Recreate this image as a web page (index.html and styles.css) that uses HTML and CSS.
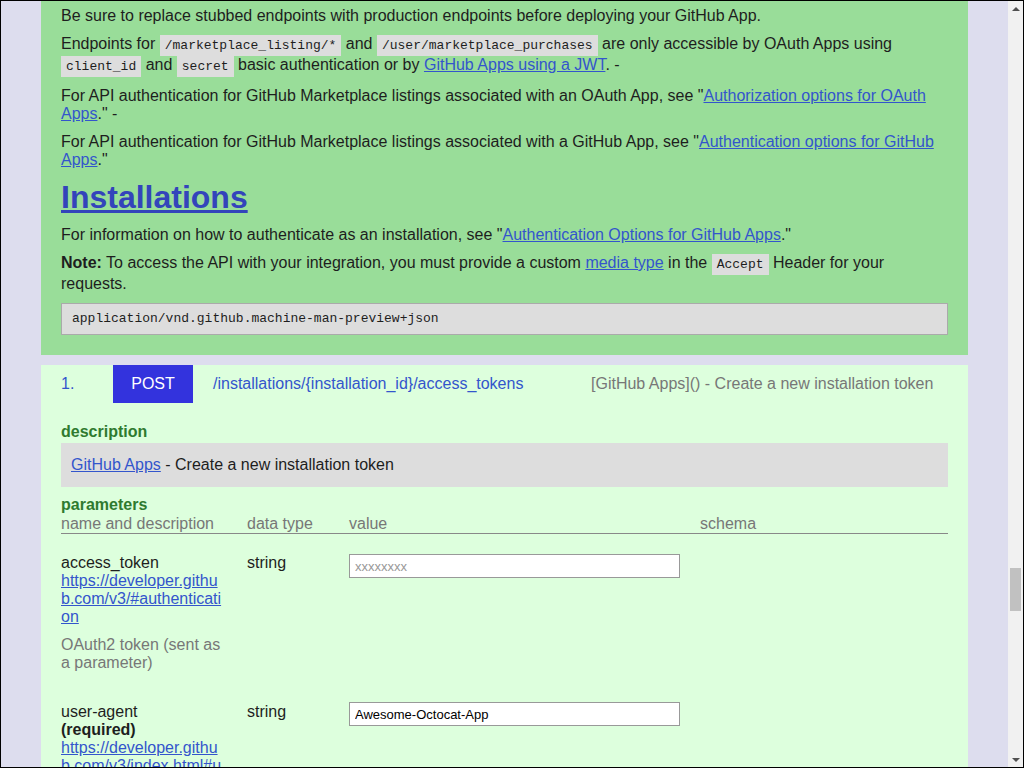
FILE: index.html
```html
<!DOCTYPE html>
<html lang="en">
<head>
<meta charset="utf-8">
<title>GitHub Apps API</title>
<link rel="stylesheet" href="styles.css">
</head>
<body>
<div class="viewport">
  <main class="page">
    <section class="intro">
      <p class="first">Be sure to replace stubbed endpoints with production endpoints before deploying your GitHub App.</p>
      <p>Endpoints for <code>/marketplace_listing/*</code> and <code>/user/marketplace_purchases</code> are only accessible by OAuth Apps using <code>client_id</code> and <code>secret</code> basic authentication or by <a href="#">GitHub Apps using a JWT</a>. -</p>
      <p>For API authentication for GitHub Marketplace listings associated with an OAuth App, see "<a href="#">Authorization options for OAuth Apps</a>." -</p>
      <p>For API authentication for GitHub Marketplace listings associated with a GitHub App, see "<a href="#">Authentication options for GitHub Apps</a>."</p>
      <h1><a href="#">Installations</a></h1>
      <p>For information on how to authenticate as an installation, see "<a href="#">Authentication Options for GitHub Apps</a>."</p>
      <p><strong>Note:</strong> To access the API with your integration, you must provide a custom <a href="#">media type</a> in the <code>Accept</code> Header for your requests.</p>
      <pre class="block">application/vnd.github.machine-man-preview+json</pre>
    </section>

    <section class="endpoint">
      <div class="endpoint-head">
        <span class="num">1.</span>
        <span class="method">POST</span>
        <span class="path">/installations/{installation_id}/access_tokens</span>
        <span class="summary">[GitHub Apps]() - Create a new installation token</span>
      </div>
      <h3 class="label">description</h3>
      <div class="desc-box"><a href="#">GitHub Apps</a> - Create a new installation token</div>
      <h3 class="label params">parameters</h3>
      <div class="param-table">
        <div class="param-row head">
          <span>name and description</span>
          <span>data type</span>
          <span>value</span>
          <span>schema</span>
        </div>
        <div class="param-row">
          <div class="pname">
            <div>access_token</div>
            <a class="plink" href="#">https://developer.github.com/v3/#authentication</a>
            <p class="pdesc">OAuth2 token (sent as a parameter)</p>
          </div>
          <div>string</div>
          <div><input class="pinput" type="text" placeholder="xxxxxxxx"></div>
          <div></div>
        </div>
        <div class="param-row">
          <div class="pname">
            <div>user-agent</div>
            <strong>(required)</strong>
            <a class="plink" href="#">https://developer.github.com/v3/index.html#user-agent-required</a>
            <p class="pdesc">The User-Agent header of the client.</p>
          </div>
          <div>string</div>
          <div><input class="pinput second" type="text" value="Awesome-Octocat-App"></div>
          <div></div>
        </div>
      </div>
    </section>
  </main>
</div>
<div class="scrollbar" aria-hidden="true">
  <div class="arrow up"></div>
  <div class="track"><div class="thumb"></div></div>
  <div class="arrow down"></div>
</div>
</body>
</html>
```

FILE: styles.css
```css
html, body {
  margin: 0;
  padding: 0;
  height: 100%;
}
body {
  box-sizing: border-box;
  border: 1px solid #000;
  display: flex;
  overflow: hidden;
  font-family: "Liberation Sans", Arial, sans-serif;
  font-size: 16px;
  color: #1e1e1e;
  background: #ddddee;
}
.viewport {
  flex: 1;
  overflow: hidden;
  background: #ddddee;
}
.page {
  width: 927px;
  margin: 0 auto;
}
a {
  color: #3355cc;
}
p {
  margin: 10px 0;
}
.intro {
  background: #99dd99;
  padding: 6px 20px 10px;
}
.intro p.first {
  margin-top: 0;
}
code {
  display: inline-block;
  font-family: "Liberation Mono", "Courier New", monospace;
  font-size: 13px;
  background: #dddddd;
  padding: 3px 5px;
}
h1 {
  font-size: 32px;
  margin: 10px 0;
}
h1 a {
  color: #3344bb;
}
.block {
  margin: 10px 0;
  background: #dddddd;
  border: 1px solid #aaaaaa;
  padding: 7px 10px 8px;
  font-family: "Liberation Mono", "Courier New", monospace;
  font-size: 13px;
}
.endpoint {
  margin-top: 10px;
  background: #ddffdd;
  padding: 0 20px 20px;
}
.endpoint-head {
  display: flex;
  align-items: center;
  height: 38px;
}
.num {
  width: 52px;
  color: #3355cc;
}
.method {
  width: 80px;
  height: 38px;
  display: flex;
  align-items: center;
  justify-content: center;
  background: #3333dd;
  color: #ffffff;
}
.path {
  width: 378px;
  padding-left: 20px;
  color: #3355cc;
}
.summary {
  color: #777777;
}
.label {
  font-size: 16px;
  font-weight: bold;
  color: #2f7a2f;
  margin: 20px 0 2px;
}
.label.params {
  margin: 9px 0 1px;
}
.desc-box {
  background: #dddddd;
  padding: 13px 10px;
}
.param-row {
  display: grid;
  grid-template-columns: 186px 102px 351px 1fr;
  padding: 10px 0;
}
.param-row.head {
  color: #777777;
  padding: 0;
  border-bottom: 1px solid #888888;
  margin-bottom: 10px;
}
.pname {
  padding-right: 22px;
}
.plink {
  display: block;
  word-break: break-all;
}
.pdesc {
  color: #777777;
  margin-bottom: 11px;
}
.pinput {
  box-sizing: border-box;
  width: 331px;
  height: 24px;
  margin: 0;
  padding: 3px 5px;
  border: 1px solid #999999;
  font-family: "Liberation Sans", Arial, sans-serif;
  font-size: 13px;
  color: #000;
  background: #fff;
}
.pinput.second {
  margin-top: -1px;
}
.pinput::placeholder {
  color: #999999;
}
.scrollbar {
  width: 15px;
  display: flex;
  flex-direction: column;
  background: #f1f1f1;
}
.arrow {
  height: 15px;
  display: flex;
  align-items: center;
  justify-content: center;
}
.arrow::before {
  content: "";
  width: 0;
  height: 0;
  border-left: 4px solid transparent;
  border-right: 4px solid transparent;
}
.arrow.up::before {
  border-bottom: 4px solid #505050;
}
.arrow.down::before {
  border-top: 4px solid #505050;
}
.track {
  flex: 1;
}
.thumb {
  margin: 552px 2px 0;
  height: 43px;
  background: #c1c1c1;
}
```
